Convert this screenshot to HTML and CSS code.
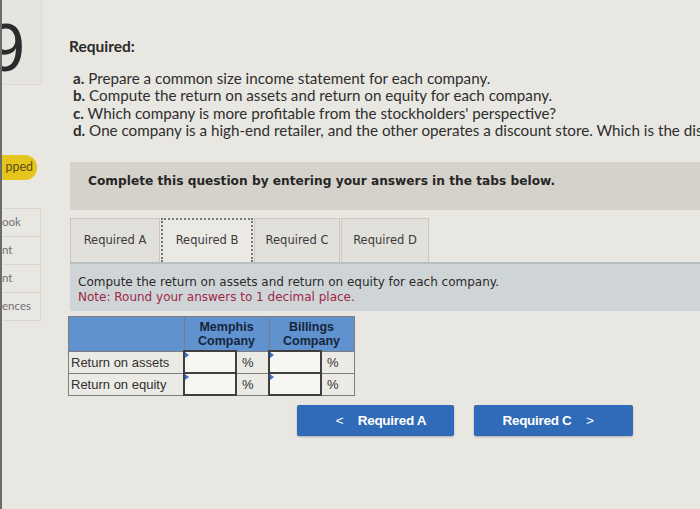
FILE: index.html
```
<!DOCTYPE html>
<html lang="en">
<head>
    <meta charset="utf-8">
    <title>Required B</title>
    <link rel="stylesheet" href="styles.css">
</head>
<body>
    <div class="page">
        <aside class="side">
            <div class="side-top"><span class="num">9</span></div>
            <div class="pill">pped</div>
            <ul class="side-list">
                <li>ook</li>
                <li>nt</li>
                <li>nt</li>
                <li>ences</li>
            </ul>
        </aside>
        <main class="main">
            <h2 class="req-title">Required:</h2>
            <ol class="req-list">
                <li><b>a.</b> Prepare a common size income statement for each company.</li>
                <li><b>b.</b> Compute the return on assets and return on equity for each company.</li>
                <li><b>c.</b> Which company is more profitable from the stockholders' perspective?</li>
                <li><b>d.</b> One company is a high-end retailer, and the other operates a discount store. Which is the discount retailer?</li>
            </ol>

            <div class="banner">Complete this question by entering your answers in the tabs below.</div>

            <div class="tabs">
                <div class="tab tab-a">Required A</div>
                <div class="tab tab-b active">Required B</div>
                <div class="tab tab-c">Required C</div>
                <div class="tab tab-d">Required D</div>
            </div>

            <div class="prompt">
                Compute the return on assets and return on equity for each company.<br>
                <span class="note">Note: Round your answers to 1 decimal place.</span>
            </div>

            <table class="grid">
                <tr class="head">
                    <th class="lbl"></th>
                    <th colspan="2">Memphis<br>Company</th>
                    <th colspan="2">Billings<br>Company</th>
                </tr>
                <tr>
                    <td class="lbl">Return on assets</td>
                    <td class="inp"></td>
                    <td class="pct">%</td>
                    <td class="inp"></td>
                    <td class="pct">%</td>
                </tr>
                <tr>
                    <td class="lbl">Return on equity</td>
                    <td class="inp"></td>
                    <td class="pct">%</td>
                    <td class="inp"></td>
                    <td class="pct">%</td>
                </tr>
            </table>

            <div class="nav">
                <button class="btn prev"><span class="chev">&lt;</span> Required A</button>
                <button class="btn next">Required C <span class="chev">&gt;</span></button>
            </div>
        </main>
    </div>
</body>
</html>
```

FILE: styles.css
```
body {
    margin: 0;
    background-color: #e9e7e1;
    font-family: Lato, "Liberation Sans", sans-serif;
    color: #2a2a2a;
    overflow: hidden;
}

.page {
    display: flex;
    height: 509px;
}

/* left sidebar, mostly cut off */
.side {
    width: 42px;
    flex: none;
    border-left: 2px solid #6b6b6b;
    box-sizing: border-box;
    overflow: hidden;
}

.side-top {
    height: 84px;
    background-color: #e6e4de;
    border-bottom: 1px solid #dcd9d2;
    border-right: 1px solid #dcd9d2;
    position: relative;
    overflow: hidden;
}

.num {
    position: absolute;
    right: 16px;
    top: 13px;
    font-family: "Liberation Sans", sans-serif;
    font-size: 68px;
    line-height: 1;
    color: #2b2b2b;
}

.pill {
    margin-top: 70px;
    height: 25px;
    width: 35px;
    background-color: #e5c41c;
    border-radius: 0 12px 12px 0;
    color: #5e5010;
    font-size: 12.5px;
    line-height: 24px;
    text-align: right;
    padding-right: 4px;
    box-sizing: border-box;
}

.side-list {
    list-style: none;
    margin: 28px 0 0;
    padding: 0;
    width: 38px;
    border: 1px solid #d9d6cf;
    border-left: none;
}

.side-list li {
    height: 27px;
    line-height: 26px;
    border-bottom: 1px solid #d9d6cf;
    font-size: 11.5px;
    color: #70707a;
}

.side-list li:last-child {
    border-bottom: none;
}

.main {
    flex: 1;
    padding-left: 28px;
    min-width: 0;
}

.req-title {
    margin: 37px 0 0 -1px;
    font-size: 15.5px;
    font-weight: bold;
    color: #2a2a2a;
}

.req-list {
    list-style: none;
    margin: 15px 0 0;
    padding-left: 3px;
    font-size: 15.2px;
    line-height: 17.3px;
    white-space: nowrap;
    color: #2e2e2e;
}

.banner {
    margin-top: 23px;
    height: 48px;
    box-sizing: border-box;
    padding: 12px 0 0 18px;
    background-color: #d5d2cb;
    font-family: "DejaVu Sans", Verdana, sans-serif;
    font-weight: bold;
    font-size: 12.2px;
    color: #262626;
}

.tabs {
    display: flex;
    gap: 1px;
    margin-top: 8px;
    height: 44px;
}

.tab {
    height: 44px;
    box-sizing: border-box;
    text-align: center;
    line-height: 43px;
    border: 1px solid #c9c6bf;
    border-bottom: none;
    background-color: #e2e0da;
    font-family: "DejaVu Sans", Verdana, sans-serif;
    font-size: 11.5px;
    color: #3a3a3a;
}

.tab-a { width: 90px; }
.tab-b { width: 92px; }
.tab-c { width: 86px; }
.tab-d { width: 88px; }

.tab.active {
    background-color: #ebe9e3;
    border: 2px dotted #777;
    border-bottom: none;
    line-height: 41px;
}

.prompt {
    height: 49px;
    box-sizing: border-box;
    padding: 11px 0 0 8px;
    background-color: #cfd5d6;
    border-top: 2px solid #b9bebf;
    font-family: "DejaVu Sans", Verdana, sans-serif;
    font-size: 12px;
    line-height: 15px;
    color: #2a2a2a;
}

.note {
    color: #a02848;
}

.grid {
    margin: 5px 0 0 -2px;
    border-collapse: collapse;
    font-family: "Liberation Sans", Arial, sans-serif;
    font-size: 13px;
}

.grid td, .grid th {
    border: 1px solid #7d7d7d;
    padding: 0;
}

.head th {
    background-color: #6092cf;
    height: 33px;
    font-size: 12.5px;
    line-height: 14px;
    font-weight: bold;
    color: #16263a;
}

.grid td {
    height: 20px;
    background-color: #eceae5;
}

.grid td.lbl {
    width: 112px;
    padding-left: 2px;
    color: #303030;
}

.grid td.inp {
    width: 50px;
    background-color: #f7f6f3;
    border: 2px solid #3f3f3f;
    position: relative;
}

.grid td.inp::before {
    content: "";
    position: absolute;
    left: 0;
    top: 0;
    border-left: 4px solid #3a72c8;
    border-top: 3px solid transparent;
    border-bottom: 3px solid transparent;
}

.grid td.pct {
    width: 33px;
    padding-left: 5px;
    box-sizing: border-box;
    color: #303030;
}

.nav {
    display: flex;
    gap: 20px;
    margin: 9px 0 0 227px;
}

.btn {
    width: 157px;
    height: 31px;
    border: none;
    border-radius: 2px;
    background-color: #2f6bb6;
    color: #ffffff;
    font-family: "Liberation Sans", Arial, sans-serif;
    font-weight: bold;
    font-size: 13.5px;
    letter-spacing: -0.3px;
    box-shadow: 0 1px 2px rgba(0, 0, 0, 0.25);
}

.btn.next {
    width: 159px;
}

.chev {
    display: inline-block;
    margin: 0 11px;
    font-weight: normal;
}
```
